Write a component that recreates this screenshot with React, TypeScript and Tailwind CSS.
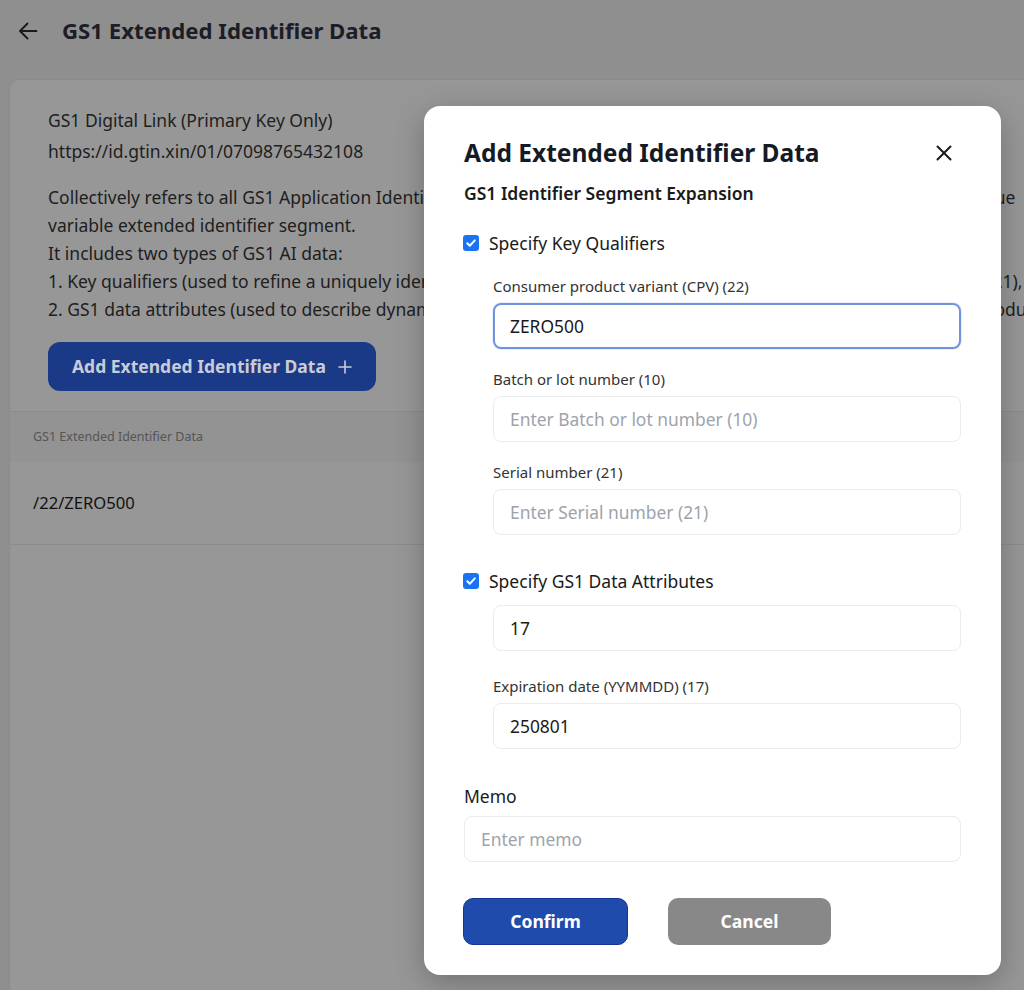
import React from "react";

const font = { fontFamily: '"Noto Sans", "Open Sans", sans-serif' };

function CheckBox() {
  return (
    <span className="flex h-4 w-4 shrink-0 items-center justify-center rounded-[3px] bg-[#1a73f0]">
      <svg width="12" height="12" viewBox="0 0 12 12" fill="none">
        <path d="M2.3 6.2 4.8 8.7 9.8 3.4" stroke="white" strokeWidth="2" strokeLinecap="round" strokeLinejoin="round" />
      </svg>
    </span>
  );
}

function Field({ label, value, placeholder, focused, mt }: { label?: string; value?: string; placeholder?: string; focused?: boolean; mt: string }) {
  return (
    <div className={mt}>
      {label && <div className="h-5 text-[15px] leading-5 text-[#333]">{label}</div>}
      <div
        className={
          (label ? "mt-[7px] " : "") +
          "flex h-[46px] items-center rounded-lg px-4 text-[17.4px] " +
          (focused ? "border-2 border-[#7093de] pl-[15px] shadow-[0_0_0_1px_rgba(112,147,222,0.15)]" : "border border-[#ebebeb]")
        }
      >
        {value ? <span className="text-[#1a1a1a]">{value}</span> : <span className="text-[#9ea3ab]">{placeholder}</span>}
      </div>
    </div>
  );
}

export default function App() {
  return (
    <div className="relative h-[990px] w-[1024px] overflow-hidden bg-[#8f8f8f]" style={font}>
      {/* page header */}
      <div className="flex h-[60px] items-center pl-[18px]">
        <svg width="20" height="18" viewBox="0 0 20 18" fill="none" className="mt-[1px]">
          <path d="M18.5 9H2M9.5 1.5 2 9l7.5 7.5" stroke="#1a1a1a" strokeWidth="1.9" strokeLinecap="round" strokeLinejoin="round" />
        </svg>
        <h1 className="ml-[24px] mt-[1px] text-[22.2px] font-bold text-[#1c1d26]">GS1 Extended Identifier Data</h1>
      </div>

      {/* content card */}
      <div className="ml-[9px] mt-[19px] h-[930px] rounded-tl-[10px] border-l border-t border-[#8b8b8b] bg-[#979797]">
        <div className="px-[38px] pt-[25px] text-[17.5px] text-[#1e1e1e]">
          <div className="leading-[31px]">GS1 Digital Link (Primary Key Only)</div>
          <div className="leading-[31px]">https://id.gtin.xin/01/07098765432108</div>
          <div className="mt-[16px] whitespace-nowrap leading-[28px]">
            <div>Collectively refers to all GS1 Application Identifiers in a GS1 Digital Link other than the primary key, that form a unique</div>
            <div>variable extended identifier segment.</div>
            <div>It includes two types of GS1 AI data:</div>
            <div>1. Key qualifiers (used to refine a uniquely identified item, such as consumer product variant (22), batch (10), serial (21),</div>
            <div>2. GS1 data attributes (used to describe dynamic information of the trade item such as expiration date (17) of the product)</div>
          </div>
          <button className="mt-[19px] flex h-[49px] items-center gap-3 rounded-xl bg-[#1a3a88] px-6 text-[17.5px] font-bold text-[#c9ccd6]">
            Add Extended Identifier Data
            <svg width="14" height="14" viewBox="0 0 14 14" fill="none">
              <path d="M7 1v12M1 7h12" stroke="#c9ccd6" strokeWidth="1.6" strokeLinecap="round" />
            </svg>
          </button>
        </div>
        <div className="mt-[20px] border-t border-[#8c8c8c]">
          <div className="flex h-[50px] items-center bg-[#939393] px-[23px] text-[12.5px] text-[#555]">GS1 Extended Identifier Data</div>
          <div className="flex h-[83px] items-center border-b border-[#8c8c8c] px-[23px] text-[16.6px] text-[#111]">/22/ZERO500</div>
        </div>
      </div>

      {/* dialog */}
      <div className="absolute left-[424px] top-[106px] w-[577px] rounded-2xl bg-white pb-[30px] pl-[39px] pr-10 pt-[31px] shadow-[0_8px_30px_rgba(0,0,0,0.25)]">
        <div className="flex h-8 items-center justify-between">
          <h2 className="pl-px text-[24.5px] font-bold leading-8 text-[#161a24]">Add Extended Identifier Data</h2>
          <svg width="16" height="16" viewBox="0 0 16 16" fill="none" className="mr-[9px]">
            <path d="M1.5 1.5l13 13M14.5 1.5l-13 13" stroke="#1a1a1a" strokeWidth="2" strokeLinecap="round" />
          </svg>
        </div>
        <div className="mt-3 h-6 pl-px text-[17.5px] font-semibold leading-6 text-[#1a1a1a]">GS1 Identifier Segment Expansion</div>

        <label className="mt-[26px] flex h-6 items-center gap-[10px] text-[17.5px] text-[#1a1a1a]">
          <CheckBox />
          Specify Key Qualifiers
        </label>
        <div className="pl-[30px]">
          <Field mt="mt-[21px]" label="Consumer product variant (CPV) (22)" value="ZERO500" focused />
          <Field mt="mt-[20px]" label="Batch or lot number (10)" placeholder="Enter Batch or lot number (10)" />
          <Field mt="mt-[20px]" label="Serial number (21)" placeholder="Enter Serial number (21)" />
        </div>

        <label className="mt-[34px] flex h-6 items-center gap-[10px] text-[17.5px] text-[#1a1a1a]">
          <CheckBox />
          Specify GS1 Data Attributes
        </label>
        <div className="pl-[30px]">
          <Field mt="mt-[12px]" value="17" />
          <Field mt="mt-[25px]" label="Expiration date (YYMMDD) (17)" value="250801" />
        </div>

        <div className="mt-[35px] h-6 pl-px text-[17.5px] leading-6 text-[#1a1a1a]">Memo</div>
        <div className="ml-px mt-2 flex h-[46px] items-center rounded-lg border border-[#ebebeb] px-4 text-[17.4px] text-[#9ea3ab]">Enter memo</div>

        <div className="mt-[36px] flex gap-10">
          <button className="h-[47px] w-[165px] rounded-[10px] border border-[#14349a] bg-[#1f4bad] text-[17.5px] font-bold text-white">Confirm</button>
          <button className="h-[47px] w-[163px] rounded-[10px] bg-[#888888] text-[17.5px] font-bold text-white">Cancel</button>
        </div>
      </div>
    </div>
  );
}
